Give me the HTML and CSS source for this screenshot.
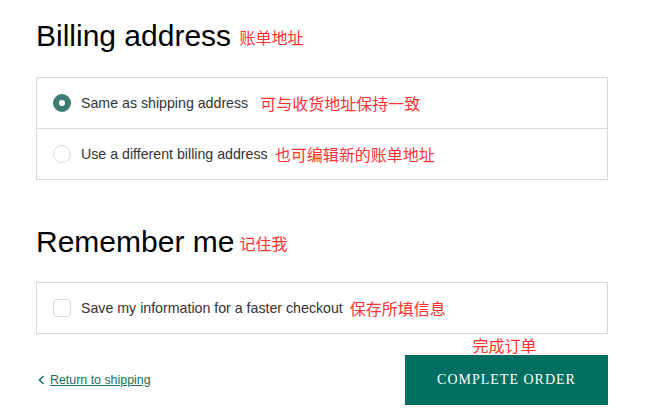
FILE: index.html
```html
<!DOCTYPE html>
<html lang="en">
<head>
    <meta charset="UTF-8">
    <meta name="viewport" content="width=device-width, initial-scale=1.0">
    <title>Checkout - Payment</title>
    <link rel="stylesheet" href="styles.css">
</head>
<body>
    <div class="checkout">
        <h2 class="section-title">Billing address <span class="note">账单地址</span></h2>
        <div class="option-box">
            <label class="option">
                <span class="radio checked"></span>
                <span class="option-text">Same as shipping address</span>
                <span class="note note-wide">可与收货地址保持一致</span>
            </label>
            <label class="option">
                <span class="radio"></span>
                <span class="option-text">Use a different billing address</span>
                <span class="note">也可编辑新的账单地址</span>
            </label>
        </div>

        <h2 class="section-title remember">Remember me<span class="note">记住我</span></h2>
        <div class="option-box">
            <label class="option">
                <span class="checkbox"></span>
                <span class="option-text">Save my information for a faster checkout</span>
                <span class="note">保存所填信息</span>
            </label>
        </div>

        <div class="footer">
            <a class="back-link" href="#">
                <svg width="7" height="10" viewBox="0 0 7 10"><polyline points="5.5,1 1.5,5 5.5,9" fill="none" stroke="#1a6f64" stroke-width="1.6"/></svg>
                <span>Return to shipping</span>
            </a>
            <button class="complete-button">
                <span class="button-note">完成订单</span>
                COMPLETE ORDER
            </button>
        </div>
    </div>
</body>
</html>
```

FILE: styles.css
```css
body {
    margin: 0;
    font-family: 'Liberation Sans', Arial, 'Noto Sans CJK SC', sans-serif;
    color: #333;
    background: #fff;
}

.checkout {
    width: 572px;
    margin-left: 36px;
    padding-top: 18px;
}

.section-title {
    margin: 0 0 23px;
    font-size: 30px;
    line-height: 36px;
    font-weight: 400;
    color: #000;
}

.section-title.remember {
    margin-top: 44px;
    margin-bottom: 22px;
}

.note {
    font-family: 'Noto Sans CJK SC', sans-serif;
    font-size: 16px;
    line-height: 1;
    color: #f33;
}

.section-title .note {
    vertical-align: 2px;
}

.section-title.remember .note {
    margin-left: 5px;
}

.option-box {
    border: 1px solid #d9d9d9;
}

.option {
    display: flex;
    align-items: center;
    height: 50px;
    padding-left: 16px;
    cursor: pointer;
}

.option + .option {
    border-top: 1px solid #d9d9d9;
}

.option-text {
    font-size: 14.2px;
    margin-left: 10px;
}

.option .note {
    margin-left: 7px;
}

.option .note.note-wide {
    margin-left: 12px;
}

.radio {
    box-sizing: border-box;
    width: 18px;
    height: 18px;
    border-radius: 50%;
    border: 1px solid #d9d9d9;
    flex-shrink: 0;
}

.radio.checked {
    border: 6px solid #3b7d71;
    background: #fff;
}

.checkbox {
    box-sizing: border-box;
    width: 18px;
    height: 18px;
    border-radius: 4px;
    border: 1px solid #d9d9d9;
    flex-shrink: 0;
}

.footer {
    display: flex;
    justify-content: space-between;
    align-items: center;
    margin-top: 21px;
}

.back-link {
    display: flex;
    align-items: center;
    gap: 5px;
    margin-left: 2px;
    font-size: 12.4px;
    color: #1a6f64;
}

.back-link span {
    text-decoration: underline;
}

.complete-button {
    position: relative;
    width: 203px;
    height: 50px;
    border: none;
    background: #006f62;
    color: #fff;
    font-family: 'Liberation Serif', 'Times New Roman', serif;
    font-size: 14px;
    letter-spacing: 1px;
    cursor: pointer;
}

.button-note {
    position: absolute;
    bottom: 100%;
    left: 0;
    right: 4px;
    text-align: center;
    font-family: 'Noto Sans CJK SC', sans-serif;
    font-size: 16px;
    line-height: 18px;
    letter-spacing: 0;
    color: #f33;
    margin-bottom: 1px;
}
```
